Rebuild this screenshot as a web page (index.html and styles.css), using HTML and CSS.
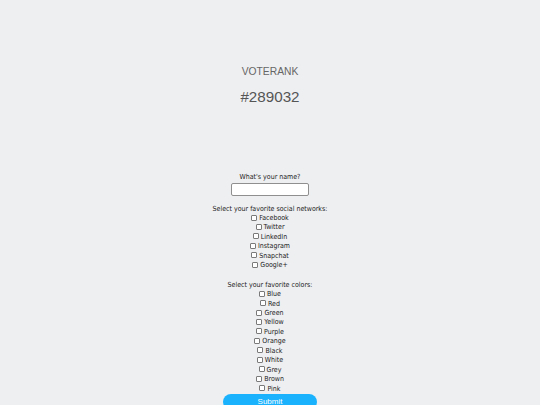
FILE: index.html
```html
<!DOCTYPE html>
<html>
<head>
<meta charset="utf-8">
<link rel="stylesheet" href="styles.css">
</head>
<body>
<header class="head">
  <div class="brand">VOTERANK</div>
  <div class="code">#289032</div>
</header>
<form class="form">
  <div class="label">What's your name?</div>
  <input class="name" type="text">
  <div class="label gap">Select your favorite social networks:</div>
  <div class="row"><input type="checkbox" class="cb">Facebook</div>
  <div class="row"><input type="checkbox" class="cb">Twitter</div>
  <div class="row"><input type="checkbox" class="cb">LinkedIn</div>
  <div class="row"><input type="checkbox" class="cb">Instagram</div>
  <div class="row"><input type="checkbox" class="cb">Snapchat</div>
  <div class="row"><input type="checkbox" class="cb">Google+</div>
  <div class="label gap2">Select your favorite colors:</div>
  <div class="row"><input type="checkbox" class="cb">Blue</div>
  <div class="row"><input type="checkbox" class="cb">Red</div>
  <div class="row"><input type="checkbox" class="cb">Green</div>
  <div class="row"><input type="checkbox" class="cb">Yellow</div>
  <div class="row"><input type="checkbox" class="cb">Purple</div>
  <div class="row"><input type="checkbox" class="cb">Orange</div>
  <div class="row"><input type="checkbox" class="cb">Black</div>
  <div class="row"><input type="checkbox" class="cb">White</div>
  <div class="row"><input type="checkbox" class="cb">Grey</div>
  <div class="row"><input type="checkbox" class="cb">Brown</div>
  <div class="row"><input type="checkbox" class="cb">Pink</div>
  <button type="button" class="submit">Submit</button>
</form>
</body>
</html>
```
FILE: styles.css
```css
html, body {
  margin: 0;
  padding: 0;
  background: #eeeff1;
}
body {
  font-family: "DejaVu Sans Condensed", "DejaVu Sans", Verdana, sans-serif;
  color: #222;
}
.head {
  display: flex;
  flex-direction: column;
  align-items: center;
  padding-top: 66px;
  font-family: "Liberation Sans", Arial, sans-serif;
}
.brand {
  font-size: 10.3px;
  line-height: 12px;
  color: #666;
}
.code {
  margin-top: 10px;
  font-size: 15.2px;
  line-height: 18px;
  color: #555;
}
.form {
  display: flex;
  flex-direction: column;
  align-items: center;
  margin: 0;
  padding-top: 67px;
  font-size: 7px;
}
.label {
  line-height: 9.5px;
}
.gap { margin-top: 9px; }
.gap2 { margin-top: 10px; }
.name {
  box-sizing: border-box;
  width: 78px;
  height: 13px;
  margin: 0;
  padding: 0 2px;
  border: 1px solid #8f8f8f;
  border-radius: 2px;
  background: #fff;
}
.row {
  height: 9.45px;
  line-height: 9.45px;
  white-space: nowrap;
}
.cb {
  -webkit-appearance: none;
  appearance: none;
  box-sizing: border-box;
  width: 6px;
  height: 6px;
  margin: 0 2px 0 0;
  vertical-align: -0.5px;
  border: 1px solid #7a7a7a;
  border-radius: 1px;
  background: #fff;
}
.submit {
  margin-top: 0;
  width: 94px;
  height: 16px;
  border: none;
  border-radius: 8px;
  background: #1ab2fd;
  color: #fff;
  font-family: "Liberation Sans", Arial, sans-serif;
  font-size: 8px;
  padding: 0;
}
```
